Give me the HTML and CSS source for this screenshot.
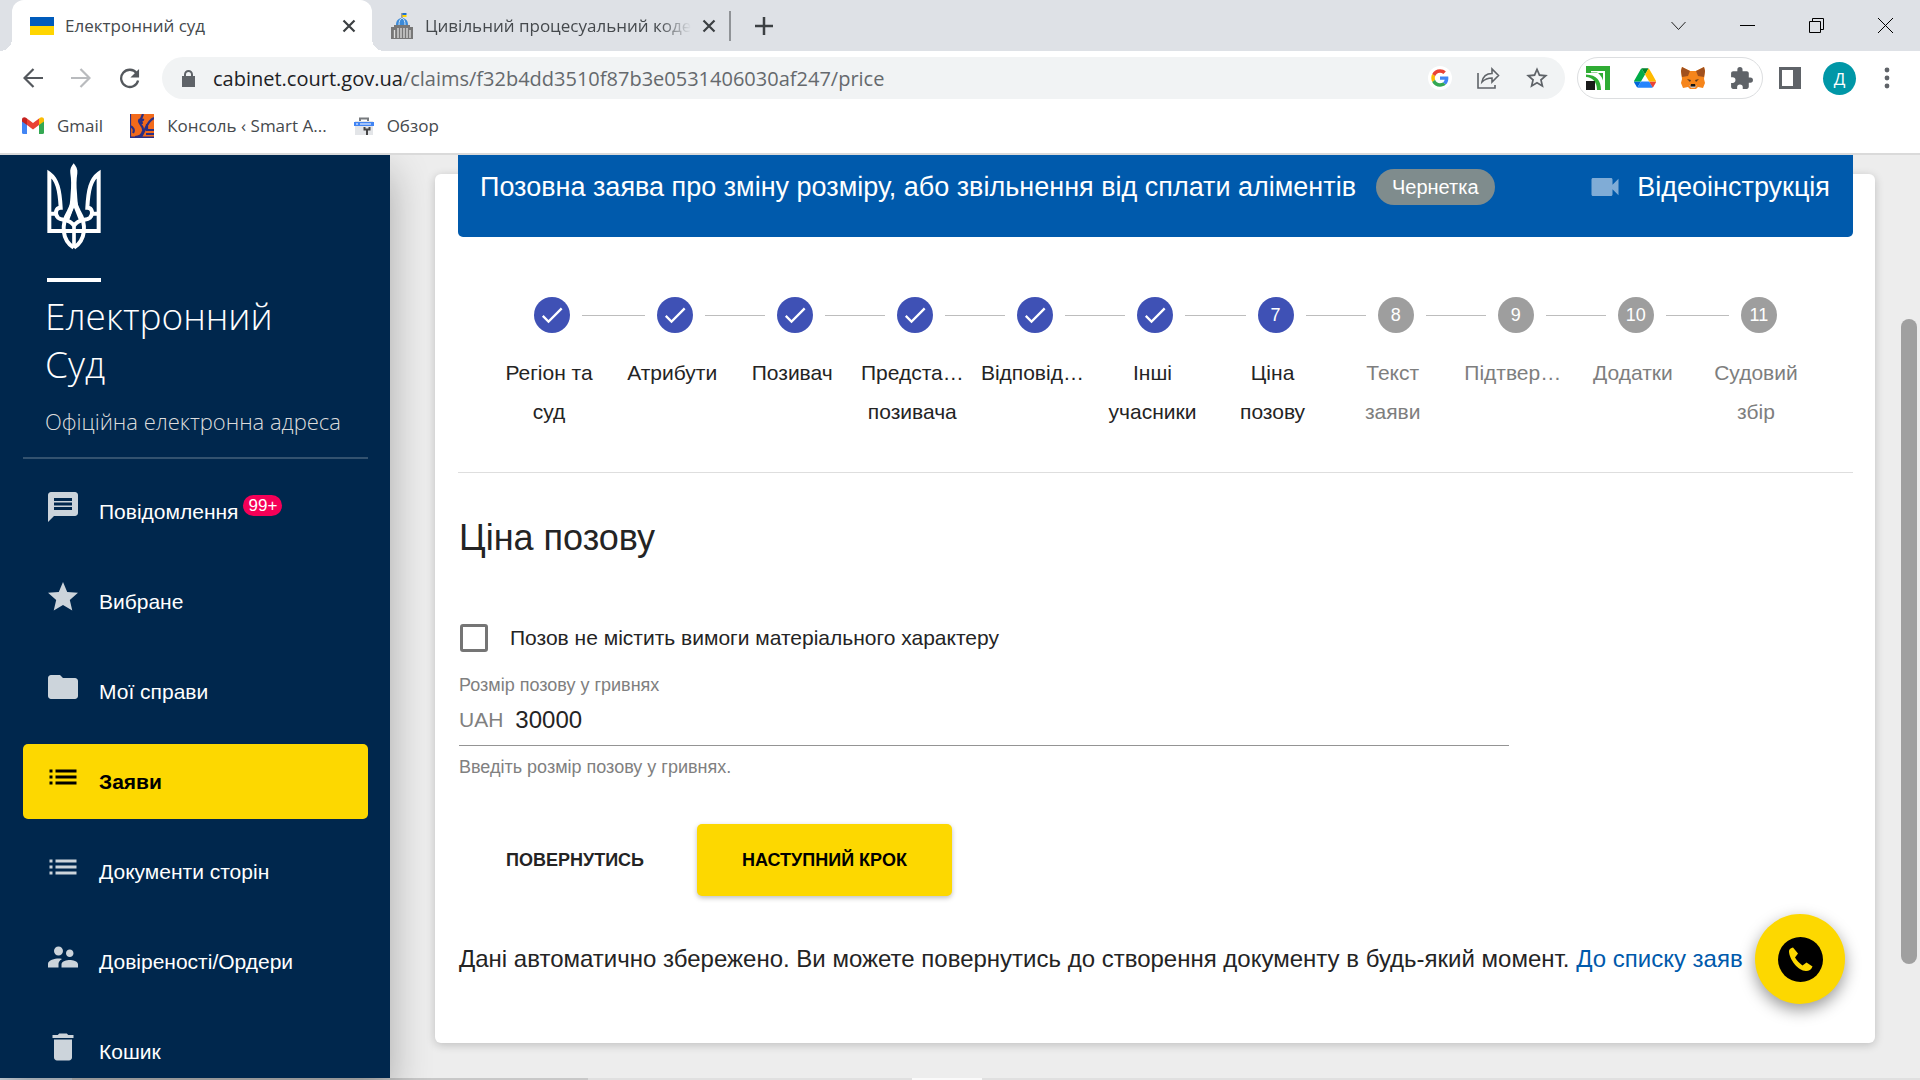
FILE: index.html
```html
<!DOCTYPE html>
<html lang="uk">
  <head>
    <meta charset="UTF-8" />
    <meta name="viewport" content="width=device-width, initial-scale=1.0" />
    <title>Електронний суд</title>
    <link rel="stylesheet" href="styles.css">
  </head>
  <body>
    <header class="browser">
      <div class="tabs">
        <div class="tab tab-active">
          <svg class="tab-icon" viewBox="0 0 24 26"><path fill="#005bbb" d="M0 4h24v9H0z"/><path fill="#ffd500" d="M0 13h24v9H0z"/></svg>
          <span class="tab-title">Електронний суд</span>
          <button class="icon-btn" aria-label="Закрити"><svg width="14" height="14" viewBox="0 0 14 14"><path d="M1.500 1.500l11 11M12.500 1.500l-11 11" stroke="#3c4043" stroke-width="2.200"/></svg></button>
        </div>
        <div class="tab">
          <svg class="tab-icon" viewBox="0 0 24 26">
            <path d="M12 5V0" stroke="#555" /><path fill="#1f6fd0" d="M12.500 0h4v2h-4z"/><path fill="#ffd500" d="M12.500 2h4v2h-4z"/>
            <path fill="#3b8ad8" d="M6 12c0-5 3-7 6-7s6 2 6 7z"/><path d="M9 12c0-4 1-6 3-7 2 1 3 3 3 7" fill="none" stroke="#cfe3f5"/>
            <path fill="#777" d="M4 12h16v2h3v12H1V14h3z"/>
            <path d="M4.500 17v8M8 15v10M11 15v10M14 15v10M17 15v10M20 17v8" stroke="#ddd" stroke-width="1.300"/>
          </svg>
          <span class="tab-title tab-fade">Цивільний процесуальний коде</span>
          <button class="icon-btn" aria-label="Закрити"><svg width="14" height="14" viewBox="0 0 14 14"><path d="M1.500 1.500l11 11M12.500 1.500l-11 11" stroke="#3c4043" stroke-width="2.200"/></svg></button>
        </div>
        <button class="icon-btn tab-new" aria-label="Нова вкладка"><svg width="18" height="18" viewBox="0 0 18 18"><path d="M9 0v18M0 9h18" stroke="#3c4043" stroke-width="2.500"/></svg></button>
        <div class="window-btns">
          <button class="icon-btn" aria-label="Пошук"><svg width="15" height="15" viewBox="0 0 15 15"><path d="M.5 4l7 7.500 7-7.500" fill="none" stroke="#222"/></svg></button>
          <button class="icon-btn" aria-label="Згорнути"><svg width="15" height="15" viewBox="0 0 15 15"><path d="M0 7.500h15" stroke="#000"/></svg></button>
          <button class="icon-btn" aria-label="Відновити"><svg width="15" height="15" viewBox="0 0 15 15"><path d="M.5 3.500h11v11H.500zM3.500 3.500v-3h11v11h-3" fill="none" stroke="#000"/></svg></button>
          <button class="icon-btn" aria-label="Закрити"><svg width="15" height="15" viewBox="0 0 15 15"><path d="M0 0l15 15M15 0L0 15" stroke="#000"/></svg></button>
        </div>
      </div>

      <div class="toolbar">
        <button class="icon-btn" aria-label="Назад"><svg width="20" height="20" viewBox="0 0 20 20"><path d="M20 10H2M10.500 1l-9 9 9 9" fill="none" stroke="#54585d" stroke-width="2.200"/></svg></button>
        <button class="icon-btn" aria-label="Вперед"><svg width="20" height="20" viewBox="0 0 20 20"><path d="M0 10h18M9.500 1l9 9-9 9" fill="none" stroke="#b9bbbe" stroke-width="2.200"/></svg></button>
        <button class="icon-btn" aria-label="Оновити"><svg width="21" height="21" viewBox="0 0 22 22"><path d="M18.500 5.500A9 9 0 1 0 20 13" fill="none" stroke="#54585d" stroke-width="2.400"/><path fill="#54585d" d="M21 1v9h-9z"/></svg></button>
        <div class="address">
          <svg width="13" height="17" viewBox="0 0 13 17"><path fill="#5f6368" d="M0 6h13v11H0z"/><path d="M3 7V4.500a3.500 3.500 0 0 1 7 0V7" fill="none" stroke="#5f6368" stroke-width="2"/></svg>
          <span class="url">cabinet.court.gov.ua<span class="url-path">/claims/f32b4dd3510f87b3e0531406030af247/price</span></span>
          <svg class="google" width="24" height="24" viewBox="-9 -9 66 66"><circle cx="24" cy="24" r="33" fill="#fff"/><path fill="#EA4335" d="M24 9.500c3.540 0 6.710 1.220 9.210 3.600l6.850-6.850C35.900 2.380 30.470 0 24 0 14.620 0 6.510 5.380 2.560 13.220l7.980 6.190C12.430 13.720 17.740 9.500 24 9.500z"/><path fill="#4285F4" d="M46.980 24.550c0-1.570-.15-3.090-.38-4.550H24v9.020h12.940c-.58 2.960-2.260 5.480-4.780 7.180l7.730 6c4.510-4.180 7.090-10.360 7.090-17.650z"/><path fill="#FBBC05" d="M10.530 28.590c-.48-1.450-.76-2.990-.76-4.590s.27-3.140.76-4.590l-7.980-6.190C.92 16.460 0 20.120 0 24c0 3.880.92 7.540 2.560 10.780l7.970-6.190z"/><path fill="#34A853" d="M24 48c6.480 0 11.930-2.130 15.890-5.810l-7.730-6c-2.150 1.450-4.920 2.300-8.160 2.300-6.260 0-11.570-4.220-13.470-9.910l-7.980 6.190C6.510 42.620 14.620 48 24 48z"/></svg>
          <button class="icon-btn" aria-label="Поділитися"><svg width="24" height="22" viewBox="0 0 24 22"><path d="M2 6v15h17v-3M6 15c1-6 4-8.500 10-8.500V2l6.500 6.500L16 15v-4c-4 0-7 1-10 4z" fill="none" stroke="#5f6368" stroke-width="1.600"/></svg></button>
          <button class="icon-btn" aria-label="Закладка"><svg width="26" height="26" viewBox="0 0 24 24"><path fill="#5f6368" d="M22 9.240l-7.190-.62L12 2 9.190 8.630 2 9.240l5.460 4.730L5.820 21 12 17.270 18.180 21l-1.630-7.030L22 9.240zM12 15.400l-3.760 2.270 1-4.280-3.320-2.880 4.380-.38L12 6.100l1.710 4.040 4.380.38-3.320 2.880 1 4.280L12 15.400z"/></svg></button>
        </div>
        <div class="extensions">
          <svg width="24" height="24" viewBox="0 0 24 24"><path fill="#2fac34" d="M0 0h24v24H0z"/><path fill="#fff" d="M5 5h14v19h-4C15 15 11 9 0 8.500V7h5z"/><path fill="#2fac34" d="M5 6.500h6c2 1 5 4 6 8V7H5z"/><path fill="#fff" d="M0 11c6 0 11 5 11 13H0z"/><path fill="#1a1a1a" d="M0 15h9v9H0z"/></svg>
          <svg width="22" height="20" viewBox="0 0 87 78"><path d="M6.600 66.850l3.850 6.650c.8 1.400 1.950 2.500 3.300 3.300l13.750-23.800h-27.500c0 1.550.4 3.100 1.200 4.500z" fill="#0066da"/><path d="M43.650 25l-13.750-23.800c-1.350.8-2.500 1.900-3.300 3.300l-25.400 44a9 9 0 0 0-1.200 4.500h27.500z" fill="#00ac47"/><path d="M73.550 76.800c1.350-.8 2.500-1.900 3.300-3.300l1.600-2.750 7.650-13.250c.8-1.400 1.200-2.950 1.200-4.500h-27.500l5.850 11.500z" fill="#ea4335"/><path d="M43.650 25l13.750-23.800c-1.350-.8-2.900-1.200-4.500-1.200h-18.500c-1.600 0-3.150.45-4.500 1.200z" fill="#00832d"/><path d="M59.800 53h-32.300l-13.750 23.800c1.350.8 2.900 1.200 4.500 1.200h50.800c1.600 0 3.150-.45 4.500-1.200z" fill="#2684fc"/><path d="M73.400 26.500l-12.700-22c-.8-1.400-1.950-2.500-3.300-3.300l-13.750 23.800 16.150 28h27.450c0-1.550-.4-3.100-1.200-4.500z" fill="#ffba00"/></svg>
          <svg width="24" height="22" viewBox="0 0 24 22"><path fill="#f6851b" d="M1 0l8 4h6l8-4 1 4-1 8 1 4-2 5-5-1-2 2h-6l-2-2-5 1-2-5 1-4L0 4z"/><path fill="#a0501e" d="M1 0l8 4-2 5-6 1L0 4zM23 0l-8 4 2 5 6 1 1-6z"/><path fill="#5b3a20" d="M6 12l4 1-1 2zM18 12l-4 1 1 2z"/><path fill="#d7c1b3" d="M8 18l2 3h4l2-3-2 1h-4z"/><path fill="#161616" d="M10 17h4l.5 2.500h-5z"/></svg>
          <svg width="25" height="25" viewBox="0 0 24 24"><path fill="#5f6368" d="M20.500 11H19V7c0-1.100-.9-2-2-2h-4V3.500a2.500 2.500 0 0 0-5 0V5H4c-1.100 0-2 .9-2 2v3.800h1.500a2.700 2.700 0 0 1 0 5.400H2V20c0 1.100.9 2 2 2h3.800v-1.500a2.700 2.700 0 0 1 5.400 0V22H17c1.100 0 2-.9 2-2v-4h1.500a2.500 2.500 0 0 0 0-5z"/></svg>
        </div>
        <button class="icon-btn" aria-label="Бічна панель"><svg width="22" height="22" viewBox="0 0 22 22"><path fill="#5f6368" d="M0 0h22v22H0z"/><path fill="#fff" d="M3 3h11v16H3z"/></svg></button>
        <button class="profile">Д</button>
        <button class="icon-btn" aria-label="Меню"><svg width="6" height="22" viewBox="0 0 6 22"><g fill="#5f6368"><circle cx="3" cy="3" r="2.400"/><circle cx="3" cy="11" r="2.400"/><circle cx="3" cy="19" r="2.400"/></g></svg></button>
      </div>

      <nav class="bookmarks">
        <a href="#"><svg width="22" height="17" viewBox="0 0 22 17"><path fill="#4285f4" d="M0 2l5 4v11H1.500A1.500 1.500 0 0 1 0 15.500z"/><path fill="#34a853" d="M22 2l-5 4v11h3.500a1.500 1.500 0 0 0 1.500-1.500z"/><path fill="#ea4335" d="M5 1.500l6 4.500 6-4.500V8l-6 4.500L5 8z"/><path fill="#c5221f" d="M0 2.500C0 .3 2.500-.5 4 .700l1 .8V8L0 4.500z"/><path fill="#fbbc04" d="M22 2.500C22 .3 19.500-.5 18 .700l-1 .8V8l5-3.500z"/></svg>Gmail</a>
        <a href="#"><svg width="24" height="24" viewBox="0 0 24 24"><path fill="#f26a1b" d="M0 0h24v24H0z"/><path d="M0 0v24M0 23.500h24M13 0l-2 5 1 5M14 6c-3-1-5-1-5 1 0 3 5 5 4 10-1 4-4 6-8 6M0 12c3 1 5 4 3 7M10 24c5-5 6-17 14-20M17 10v6h7M16 20h8" fill="none" stroke="#2b2f83" stroke-width="2.200"/></svg>Консоль ‹ Smart A...</a>
        <a href="#"><svg width="20" height="18" viewBox="0 0 20 18"><path d="M6 5V1.500h8V5" fill="none" stroke="#777a7e" stroke-width="2"/><path fill="#e3e5e8" d="M1 4h18v14H1z"/><path fill="#4285f4" d="M0 5h20v4H0z"/><path fill="#fff" d="M2 6.500h2v1H2zM6 6.500h11v1H6z"/><path d="M13 18v-5M10.500 10v2.500h5V10" fill="none" stroke="#444" stroke-width="2"/></svg>Обзор</a>
      </nav>
    </header>

    <div class="app">
      <aside class="sidebar">
        <div class="brand">
          <!-- trident -->
          <svg class="trident" viewBox="141 38 164 264">
            <g fill="none" stroke="#fff" stroke-width="12">
              <path d="M190 242H149V70c24 18 31 48 34 102-16 0-18 20-8 30 12 10 34 2 48 24"/>
              <path d="M255 242h42V70c-24 18-31 48-34 102 16 0 18 20 8 30-12 10-34 2-48 24"/>
              <path d="M150 190h18M296 190h-18M190 242h66"/>
              <path d="M222 292c-36-24-38-70-15-108 8-14 13-26 15-40M223 292c36-24 38-70 15-108-8-14-13-26-15-40"/>
              <path d="M223 222v70" stroke-width="11"/>
              <path d="M222 162l-18 46M224 162l18 46" stroke-width="9"/>
            </g>
            <path fill="#fff" d="M222 39c7 8 13 18 11 30-3 18-3 38-1 60 1 18 2 30 4 40h-27c2-10 3-22 4-40 2-22 2-42-1-60-2-12 3-22 10-30z"/>
            <path fill="#00274d" d="M222 176l9 24-9 12-9-12z"/>
          </svg>
          <div class="brand-line"></div>
          <h1 class="brand-title">Електронний<br>Суд</h1>
          <p class="brand-sub">Офіційна електронна адреса</p>
        </div>
        <nav class="menu">
          <a class="menu-item" href="#"><svg viewBox="0 0 24 24"><path d="M20 2H4c-1.100 0-1.990.9-1.990 2L2 22l4-4h14c1.100 0 2-.9 2-2V4c0-1.100-.9-2-2-2zM6 9h12v2H6V9zm12 5H6v-2h12v2zm0-6H6V6h12v2z"/></svg>Повідомлення<span class="count">99+</span></a>
          <a class="menu-item" href="#"><svg viewBox="0 0 24 24"><path d="M12 17.270L18.180 21l-1.640-7.030L22 9.240l-7.190-.61L12 2 9.190 8.630 2 9.240l5.460 4.730L5.820 21z"/></svg>Вибране</a>
          <a class="menu-item" href="#"><svg viewBox="0 0 24 24"><path d="M10 4H4c-1.100 0-1.990.9-1.990 2L2 18c0 1.100.9 2 2 2h16c1.100 0 2-.9 2-2V8c0-1.100-.9-2-2-2h-8l-2-2z"/></svg>Мої справи</a>
          <a class="menu-item menu-active" href="#"><svg viewBox="0 0 24 24"><path d="M3 13h2v-2H3v2zm0 4h2v-2H3v2zm0-8h2V7H3v2zm4 4h14v-2H7v2zm0 4h14v-2H7v2zM7 7v2h14V7H7z"/></svg>Заяви</a>
          <a class="menu-item" href="#"><svg viewBox="0 0 24 24"><path d="M3 13h2v-2H3v2zm0 4h2v-2H3v2zm0-8h2V7H3v2zm4 4h14v-2H7v2zm0 4h14v-2H7v2zM7 7v2h14V7H7z"/></svg>Документи сторін</a>
          <a class="menu-item" href="#"><svg viewBox="0 0 24 24"><path d="M16.500 12c1.380 0 2.490-1.120 2.490-2.500S17.880 7 16.500 7 14 8.120 14 9.500s1.120 2.500 2.500 2.500zM9 11c1.660 0 2.990-1.340 2.990-3S10.660 5 9 5 6 6.340 6 8s1.340 3 3 3zm7.500 3c-1.830 0-5.500.92-5.500 2.750V19h11v-2.250c0-1.830-3.670-2.750-5.500-2.750zM9 13c-2.330 0-7 1.170-7 3.500V19h7v-2.250c0-.85.33-2.340 2.370-3.470C10.500 13.100 9.660 13 9 13z"/></svg>Довіреності/Ордери</a>
          <a class="menu-item" href="#"><svg viewBox="0 0 24 24"><path d="M6 19c0 1.100.9 2 2 2h8c1.100 0 2-.9 2-2V7H6v12zM19 4h-3.500l-1-1h-5l-1 1H5v2h14V4z"/></svg>Кошик</a>
        </nav>
      </aside>

      <main class="content">
        <section class="card">
          <div class="card-header">
            <h2 class="card-title">Позовна заява про зміну розміру, або звільнення від сплати аліментів</h2>
            <span class="status">Чернетка</span>
            <a class="video" href="#"><svg width="36" height="36" viewBox="0 0 24 24"><path fill="#80acd6" d="M17 10.500V7c0-.55-.45-1-1-1H4c-.55 0-1 .45-1 1v10c0 .55.45 1 1 1h12c.55 0 1-.45 1-1v-3.500l4 4v-11l-4 4z"/></svg>Відеоінструкція</a>
          </div>

          <ol class="steps">
            <li class="step done"><span class="mark"><svg viewBox="0 0 24 24"><path d="M9 16.200L4.800 12l-1.400 1.400L9 19 21 7l-1.400-1.400z"/></svg></span><span class="label">Регіон та<br>суд</span></li>
            <li class="step done"><span class="mark"><svg viewBox="0 0 24 24"><path d="M9 16.200L4.800 12l-1.400 1.400L9 19 21 7l-1.400-1.400z"/></svg></span><span class="label">Атрибути</span></li>
            <li class="step done"><span class="mark"><svg viewBox="0 0 24 24"><path d="M9 16.200L4.800 12l-1.400 1.400L9 19 21 7l-1.400-1.400z"/></svg></span><span class="label">Позивач</span></li>
            <li class="step done"><span class="mark"><svg viewBox="0 0 24 24"><path d="M9 16.200L4.800 12l-1.400 1.400L9 19 21 7l-1.400-1.400z"/></svg></span><span class="label">Предста…<br>позивача</span></li>
            <li class="step done"><span class="mark"><svg viewBox="0 0 24 24"><path d="M9 16.200L4.800 12l-1.400 1.400L9 19 21 7l-1.400-1.400z"/></svg></span><span class="label">Відповід…</span></li>
            <li class="step done"><span class="mark"><svg viewBox="0 0 24 24"><path d="M9 16.200L4.800 12l-1.400 1.400L9 19 21 7l-1.400-1.400z"/></svg></span><span class="label">Інші<br>учасники</span></li>
            <li class="step done"><span class="mark">7</span><span class="label">Ціна<br>позову</span></li>
            <li class="step"><span class="mark">8</span><span class="label">Текст<br>заяви</span></li>
            <li class="step"><span class="mark">9</span><span class="label">Підтвер…</span></li>
            <li class="step"><span class="mark">10</span><span class="label">Додатки</span></li>
            <li class="step"><span class="mark">11</span><span class="label">Судовий<br>збір</span></li>
          </ol>

          <form class="form">
            <h3 class="form-title">Ціна позову</h3>
            <label class="check"><input type="checkbox">Позов не містить вимоги матеріального характеру</label>
            <div class="field">
              <label class="hint" for="price">Розмір позову у гривнях</label>
              <div class="field-row"><span class="prefix">UAH</span><input id="price" type="text" value="30000"></div>
              <div class="hint">Введіть розмір позову у гривнях.</div>
            </div>
            <div class="actions">
              <button type="button" class="btn">ПОВЕРНУТИСЬ</button>
              <button type="button" class="btn btn-next">НАСТУПНИЙ КРОК</button>
            </div>
            <p class="saved">Дані автоматично збережено. Ви можете повернутись до створення документу в будь-який момент. <a href="#">До списку заяв</a></p>
          </form>
        </section>
      </main>

      <button class="call" aria-label="Зателефонувати"><svg width="45" height="45" viewBox="0 0 45 45"><circle cx="22.500" cy="22.500" r="22.500"/><path fill="#fdd800" d="M11 14c0-2 2-3 4-3.500l5 6-3 4c2 3 4 5.500 7.500 8l4-3 6 4c-1 3-3.500 4.500-6.500 4.500C20 34 11 22 11 14z"/></svg></button>
      <div class="scrollbar"></div>
    </div>
    <div class="taskbar"><span class="taskbar-start"></span><span class="taskbar-search"></span><span class="taskbar-rest"></span><span class="taskbar-app"></span></div>
  </body>
</html>
```
FILE: styles.css
```css
* {
  box-sizing: border-box;
}
body {
  margin: 0;
  height: 100vh;
  display: flex;
  flex-direction: column;
  overflow: hidden;
  font-family: "Liberation Sans", Arial, sans-serif;
  color: #242424;
}
a {
  text-decoration: none;
}
button {
  border: none;
  background: none;
  padding: 0;
  font-family: inherit;
  color: inherit;
  cursor: pointer;
}
h1, h2, h3, p, ol {
  margin: 0;
  padding: 0;
  font-weight: 400;
}
svg {
  flex: none;
}

/* browser window */
.browser {
  flex: none;
  position: relative;
  z-index: 1;
  background: #fff;
  border-bottom: 2px solid #dadada;
  font-family: "Open Sans", "Noto Sans", sans-serif;
}
.icon-btn {
  display: flex;
  align-items: center;
  justify-content: center;
}
.tabs {
  height: 51px;
  display: flex;
  align-items: center;
  padding-left: 12px;
  background: #dee1e6;
}
.tab {
  width: 357px;
  height: 51px;
  display: flex;
  align-items: center;
  gap: 11px;
  padding: 0 16px 0 18px;
}
.tab-active {
  width: 360px;
  position: relative;
  background: #fff;
  border-radius: 12px 12px 0 0;
}
.tab-active::before,
.tab-active::after {
  content: "";
  position: absolute;
  bottom: 0;
  width: 12px;
  height: 12px;
}
.tab-active::before {
  left: -12px;
  background: radial-gradient(circle at 0 0, transparent 12px, #fff 12px);
}
.tab-active::after {
  right: -12px;
  background: radial-gradient(circle at 100% 0, transparent 12px, #fff 12px);
}
.tab-icon {
  width: 24px;
  height: 26px;
}
.tab-title {
  flex: 1;
  white-space: nowrap;
  font-size: 17px;
  color: #45494d;
}
.tab-fade {
  -webkit-mask-image: linear-gradient(to right, #000 88%, transparent);
  mask-image: linear-gradient(to right, #000 88%, transparent);
}
.tab-new {
  height: 30px;
  padding-left: 24px;
  border-left: 2px solid #909397;
}
.window-btns {
  margin-left: auto;
  padding-right: 27px;
  display: flex;
  align-items: center;
  gap: 54px;
  height: 42px;
}
.toolbar {
  height: 54px;
  display: flex;
  align-items: center;
  gap: 28px;
  padding: 0 30px 0 23px;
}
.address {
  flex: 1;
  height: 42px;
  display: flex;
  align-items: center;
  gap: 24px;
  margin-left: -6px;
  margin-right: -16px;
  padding: 0 15px 0 20px;
  border-radius: 21px;
  background: #f1f3f4;
}
.url {
  flex: 1;
  margin-left: -6px;
  font-size: 20px;
  color: #202124;
}
.url-path {
  color: #65696d;
}
.extensions {
  height: 42px;
  width: 186px;
  display: flex;
  align-items: center;
  justify-content: space-between;
  margin-right: -12px;
  padding: 0 8px;
  border: 1px solid #dcdee0;
  border-radius: 21px;
}
.profile {
  width: 33px;
  height: 33px;
  margin-left: -6px;
  border-radius: 50%;
  background: #0097a7;
  color: #fff;
  font-size: 17px;
}
.bookmarks {
  height: 48px;
  display: flex;
  align-items: center;
  gap: 27px;
  padding: 0 22px 7px;
}
.bookmarks a {
  display: flex;
  align-items: center;
  gap: 13px;
  font-size: 17px;
  color: #45494d;
}

/* page */
.app {
  flex: 1;
  min-height: 0;
  display: flex;
  position: relative;
  background: #ededed;
}
.sidebar {
  flex: none;
  width: 390px;
  overflow: hidden;
  padding: 8px 22px 0 23px;
  background: #00274d;
  color: #fff;
  box-shadow: 0 18px 38px rgba(0, 0, 0, 0.3);
}
.brand {
  height: 296px;
  padding-left: 22px;
  border-bottom: 2px solid #33526f;
  font-family: "Open Sans", "Noto Sans", sans-serif;
}
.trident {
  display: block;
  width: 56px;
  height: 88px;
  margin-left: 1px;
}
.brand-line {
  width: 54px;
  height: 4px;
  margin: 27px 0 10px 2px;
  background: #fff;
}
.brand-title {
  font-size: 37px;
  font-weight: 300;
  line-height: 48px;
}
.brand-sub {
  margin-top: 18px;
  font-size: 22px;
  font-weight: 300;
  line-height: 30px;
  color: #dcdcdc;
}
.menu {
  padding-top: 15px;
}
.menu-item {
  display: flex;
  align-items: center;
  height: 75px;
  margin-bottom: 15px;
  padding-left: 22px;
  border-radius: 5px;
  font-size: 21px;
  color: #fff;
}
.menu-item svg {
  width: 36px;
  height: 36px;
  margin: 0 18px 9px 0;
  fill: #ccd4db;
}
.menu-active {
  background: #fdd800;
  color: #000;
  font-weight: 700;
}
.menu-active svg {
  fill: #000;
}
.count {
  margin: 0 0 12px 5px;
  padding: 0 5px;
  border-radius: 11px;
  background: #f50057;
  font-size: 17px;
  line-height: 21px;
}

.content {
  flex: 1;
  padding: 19px 45px 35px;
}
.card {
  display: flow-root;
  height: 100%;
  padding: 0 22px 0 23px;
  border-radius: 6px;
  background: #fff;
  box-shadow: 0 2px 10px rgba(0, 0, 0, 0.2);
}
.card-header {
  height: 82px;
  margin-top: -19px;
  display: flex;
  align-items: center;
  padding: 0 23px 18px 22px;
  border-radius: 0 0 5px 5px;
  background: #005aac;
  color: #fff;
}
.card-title {
  font-size: 27px;
}
.status {
  margin-left: 20px;
  padding: 0 16px;
  border-radius: 18px;
  background: #7f8c8d;
  font-size: 20px;
  line-height: 36px;
}
.video {
  margin-left: auto;
  display: flex;
  align-items: center;
  gap: 14px;
  font-size: 27px;
  color: #fff;
}

.steps {
  display: grid;
  grid-template-columns: 21fr repeat(9, 20fr) 21fr;
  height: 236px;
  padding: 60px 31px 0;
  border-bottom: 1px solid #dedede;
  list-style: none;
}
.step {
  display: grid;
  grid-template-columns: 1fr 36px 1fr;
  column-gap: 12px;
  align-content: start;
  align-items: center;
  text-align: center;
  font-size: 21px;
  color: #7e7e7e;
}
.step::before,
.step::after {
  content: "";
  grid-row: 1;
  height: 1px;
  background: #bdbdbd;
}
.step::before {
  grid-column: 1;
}
.step::after {
  grid-column: 3;
}
.step:first-child::before,
.step:last-child::after {
  background: none;
}
.mark {
  grid-row: 1;
  grid-column: 2;
  height: 36px;
  display: flex;
  align-items: center;
  justify-content: center;
  border-radius: 50%;
  background: #9e9e9e;
  color: #fff;
  font-size: 18px;
}
.mark svg {
  width: 28px;
  height: 28px;
  fill: #fff;
}
.label {
  grid-column: 1 / 4;
  margin-top: 20px;
  padding-right: 6px;
  line-height: 39px;
}
.done {
  color: #242424;
}
.done .mark {
  background: #3f51b5;
}

.form {
  padding-left: 1px;
}
.form-title {
  margin-top: 44px;
  font-size: 36px;
  line-height: 42px;
}
.check {
  display: flex;
  align-items: center;
  gap: 22px;
  margin-top: 64px;
  padding-left: 1px;
  font-size: 21px;
  line-height: 30px;
}
.check input {
  appearance: none;
  width: 28px;
  height: 28px;
  margin: 0;
  border: 3px solid #757575;
  border-radius: 3px;
}
.field {
  width: 1050px;
  max-width: 100%;
  margin-top: 22px;
}
.hint {
  display: block;
  font-size: 18px;
  line-height: 20px;
  color: #808080;
}
.field-row {
  display: flex;
  align-items: center;
  gap: 12px;
  height: 51px;
  margin-bottom: 11px;
  border-bottom: 1px solid #949494;
}
.prefix {
  font-size: 21px;
  color: #808080;
}
.field-row input {
  flex: 1;
  border: none;
  outline: none;
  padding: 0;
  font-family: inherit;
  font-size: 24px;
  color: #242424;
}
.actions {
  display: flex;
  gap: 8px;
  margin-top: 47px;
  padding-left: 2px;
}
.btn {
  height: 72px;
  padding: 0 45px;
  border-radius: 5px;
  font-size: 18px;
  font-weight: 700;
}
.btn-next {
  background: #fdd800;
  color: #000;
  box-shadow: 0 2px 5px rgba(0, 0, 0, 0.25);
}
.saved {
  margin-top: 48px;
  font-size: 24px;
  line-height: 30px;
}
.saved a {
  color: #005aac;
}
.call {
  position: absolute;
  right: 75px;
  bottom: 74px;
  width: 90px;
  height: 90px;
  display: flex;
  align-items: center;
  justify-content: center;
  border-radius: 50%;
  background: #fdd800;
  box-shadow: 0 6px 16px rgba(0, 0, 0, 0.4);
}
.scrollbar {
  position: absolute;
  right: 3px;
  top: 164px;
  width: 16px;
  height: 645px;
  border-radius: 8px;
  background: #a0a0a0;
}
.taskbar {
  flex: none;
  height: 2px;
  display: flex;
  background: #e0e0e0;
}
.taskbar-start {
  width: 72px;
  background: #d4dde6;
}
.taskbar-search {
  width: 516px;
  background: #c8c8c8;
}
.taskbar-rest {
  width: 324px;
}
.taskbar-app {
  width: 70px;
  background: #fafafa;
}
```
